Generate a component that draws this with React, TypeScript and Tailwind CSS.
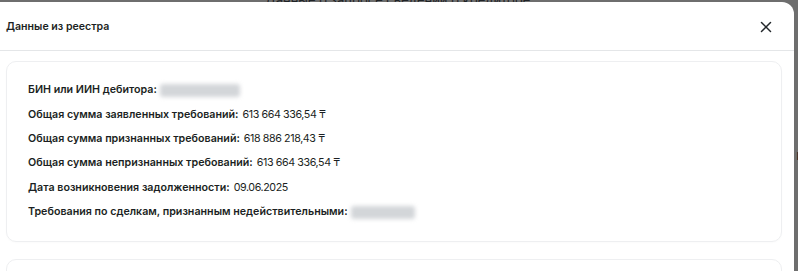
import { X } from "lucide-react";

type Row = { label: string; value?: string; blur?: string };

const rows: Row[] = [
  { label: "БИН или ИИН дебитора:", blur: "w-[80px]" },
  { label: "Общая сумма заявленных требований:", value: "613 664 336,54 ₸" },
  { label: "Общая сумма признанных требований:", value: "618 886 218,43 ₸" },
  { label: "Общая сумма непризнанных требований:", value: "613 664 336,54 ₸" },
  { label: "Дата возникновения задолженности:", value: "09.06.2025" },
  { label: "Требования по сделкам, признанным недействительными:", blur: "w-[64px]" },
];

export default function App() {
  return (
    <div className="relative h-[271px] w-[798px] overflow-hidden bg-[#6e6e6e] font-[Inter,'Noto_Sans',sans-serif]">
      {/* page behind the overlay */}
      <div className="absolute left-[265px] top-[-9px] text-[13px] text-[#1f2326]">
        Данные о запросе сведений о кредиторе
      </div>
      <div className="absolute right-[-6px] top-[146px] text-[13px] text-[#1f2326]">й</div>

      {/* modal */}
      <div className="relative mt-[2px] h-[300px] w-[794px] rounded-tr-[12px] bg-white">
        <div className="flex h-[49px] items-center justify-between border-b border-[#e4e6e8] pl-[6px] pr-[19px] pt-[1px]">
          <h2 className="text-[10.6px] font-semibold text-[#1b1f23]">Данные из реестра</h2>
          <X className="h-[18px] w-[18px] text-[#22272b]" strokeWidth={2} />
        </div>

        <div className="pl-[6px] pr-[12px] pt-[10px]">
          <div className="flex flex-col gap-[8px] rounded-[10px] border border-[#eeeff1] px-[21px] pb-[21px] pt-[20px] shadow-[0_1px_2px_rgba(0,0,0,0.02)]">
            {rows.map((r) => (
              <div key={r.label} className="flex h-[16.4px] items-center whitespace-nowrap text-[10.7px] leading-[16px] text-[#1b1f23]">
                <span className="font-semibold">{r.label}</span>
                {r.value && <span className="ml-[4px] tracking-[-0.4px]">{r.value}</span>}
                {r.blur && (
                  <span className={`ml-[3px] inline-block h-[13px] rounded-[3px] bg-[#d3d6d9] blur-[2px] ${r.blur}`} />
                )}
              </div>
            ))}
          </div>

          <div className="mt-[17px] h-[40px] rounded-[10px] border border-[#eeeff1]" />
        </div>
      </div>
    </div>
  );
}
